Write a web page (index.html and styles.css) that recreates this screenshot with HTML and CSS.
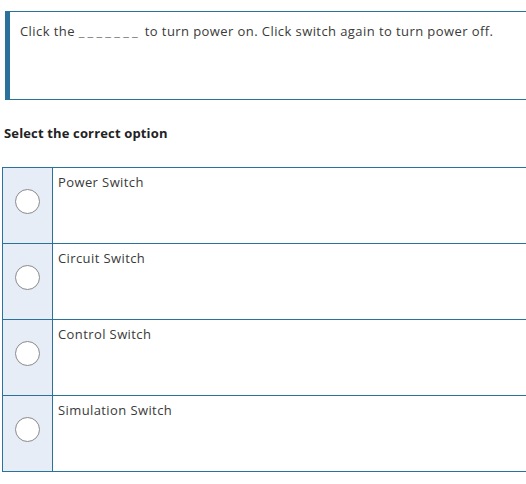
FILE: index.html
```html
<!DOCTYPE html>
<html>
<head>
<meta charset="utf-8">
<link rel="stylesheet" href="styles.css">
</head>
<body>
<div class="question">
  <p class="question-text">Click the <span class="blank">_______</span> to turn power on. Click switch again to turn power off.</p>
</div>
<h2 class="prompt">Select the correct option</h2>
<div class="options">
  <div class="option">
    <div class="option-radio"><span class="radio"></span></div>
    <div class="option-label">Power Switch</div>
  </div>
  <div class="option">
    <div class="option-radio"><span class="radio"></span></div>
    <div class="option-label">Circuit Switch</div>
  </div>
  <div class="option">
    <div class="option-radio"><span class="radio"></span></div>
    <div class="option-label">Control Switch</div>
  </div>
  <div class="option">
    <div class="option-radio"><span class="radio"></span></div>
    <div class="option-label">Simulation Switch</div>
  </div>
</div>
</body>
</html>
```
FILE: styles.css
```css
html, body {
  margin: 0;
  padding: 0;
  background: #ffffff;
}
body {
  font-family: "Open Sans", "Noto Sans", sans-serif;
  color: #333333;
}
.question {
  margin: 11px 0 0 5px;
  height: 87px;
  border-left: 5px solid #2a729c;
  border-top: 1px solid #2a729c;
  border-bottom: 1px solid #2a729c;
}
.question-text {
  margin: 0;
  padding: 10px 0 0 10px;
  font-size: 13px;
  line-height: 18px;
  letter-spacing: 0.42px;
  color: #3a3a3a;
}
.blank {
  letter-spacing: 3.2px;
  color: #777;
}
.prompt {
  margin: 24px 0 0 4px;
  font-size: 13px;
  line-height: 18px;
  font-weight: 700;
  letter-spacing: 0.15px;
  color: #222;
}
.options {
  margin: 25px 0 0 2px;
  border-bottom: 1px solid #2a729c;
}
.option {
  display: flex;
  height: 75px;
  border-top: 1px solid #2a729c;
}
.option-radio {
  flex: none;
  width: 51px;
  box-sizing: border-box;
  background: #e6edf7;
  border-left: 1px solid #2a729c;
  border-right: 1px solid #2a729c;
  display: flex;
  justify-content: center;
  padding-top: 21px;
}
.radio {
  width: 25px;
  height: 25px;
  box-sizing: border-box;
  border: 1px solid #8a8a8a;
  border-radius: 50%;
  background: #fff;
}
.option-label {
  padding: 5px 0 0 5px;
  font-size: 13px;
  line-height: 18px;
  letter-spacing: 0.4px;
  color: #3a3a3a;
}
```
